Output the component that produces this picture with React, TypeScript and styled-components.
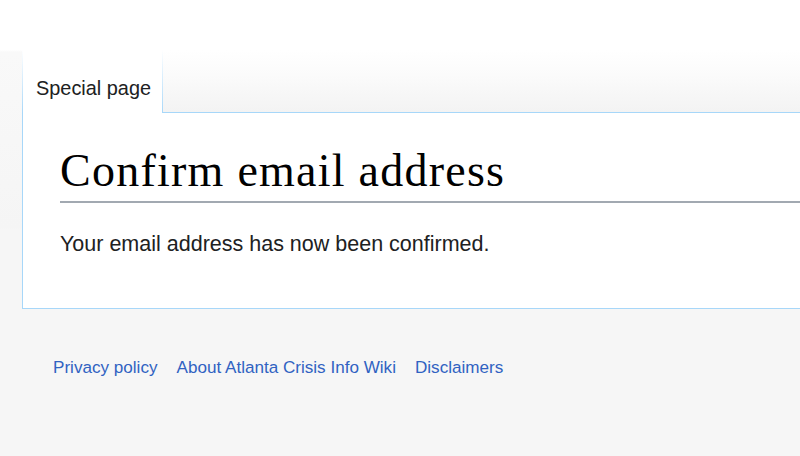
import * as React from "react";
import styled, { createGlobalStyle } from "styled-components";

const GlobalStyle = createGlobalStyle`
  html, body {
    margin: 0;
    padding: 0;
    background: #f6f6f6;
  }
  body {
    font-family: "Liberation Sans", Arial, sans-serif;
    color: #202122;
  }
`;

const Page = styled.div`
  width: 800px;
  height: 456px;
  overflow: hidden;
  background: linear-gradient(to bottom, #fff 0, #fff 50px, #f9f9f9 52px, #f5f5f5 228px, #f6f6f6 229px);
`;

const HeaderBase = styled.div`
  height: 50px;
`;

const Main = styled.div`
  margin-left: 22px;
`;

const TabsRow = styled.div`
  display: flex;
  height: 63px;
`;

const blueEdge = "linear-gradient(to bottom, rgba(167, 215, 249, 0) 0, #a7d7f9 100%)";

const Tab = styled.div<{ $selected?: boolean }>`
  box-sizing: border-box;
  width: 141px;
  height: 63px;
  padding: 26px 10px 0 14px;
  font-size: 19.9px;
  line-height: 24px;
  color: #202122;
  white-space: nowrap;
  background:
    ${blueEdge} left top / 1px 100% no-repeat,
    ${blueEdge} right top / 1px 100% no-repeat,
    ${(p) => (p.$selected ? "#fff" : "linear-gradient(to bottom, #fff, #f4f4f4)")};
`;

const TabFill = styled.div`
  flex: 1;
  box-sizing: border-box;
  height: 63px;
  border-bottom: 1px solid #a7d7f9;
  background: linear-gradient(to bottom, #fff 0, #fbfbfb 40%, #f3f3f3 100%);
`;

const Content = styled.div`
  background: #fff;
  border-left: 1px solid #a7d7f9;
  border-bottom: 1px solid #a7d7f9;
  padding: 28px 0 46px 37px;
`;

const Heading = styled.h1`
  margin: 0;
  font-family: "Liberation Serif", "Times New Roman", serif;
  font-weight: normal;
  font-size: 46px;
  letter-spacing: 1.25px;
  line-height: 60px;
  color: #000;
  border-bottom: 2px solid #a2a9b1;
  white-space: nowrap;
`;

const Message = styled.p`
  margin: 25px 0 0;
  font-size: 21.5px;
  line-height: 33.6px;
  color: #202122;
`;

const Footer = styled.div`
  display: flex;
  gap: 19px;
  padding: 47px 0 0 53px;
`;

const FooterLink = styled.a`
  font-size: 17.1px;
  line-height: 24px;
  color: #3062c2;
  text-decoration: none;
  white-space: nowrap;
`;

export default function App() {
  return (
    <Page>
      <GlobalStyle />
      <HeaderBase />
      <Main>
        <TabsRow>
          <Tab $selected>Special page</Tab>
          <TabFill />
        </TabsRow>
        <Content>
          <Heading>Confirm email address</Heading>
          <Message>Your email address has now been confirmed.</Message>
        </Content>
      </Main>
      <Footer>
        <FooterLink href="#">Privacy policy</FooterLink>
        <FooterLink href="#">About Atlanta Crisis Info Wiki</FooterLink>
        <FooterLink href="#">Disclaimers</FooterLink>
      </Footer>
    </Page>
  );
}
